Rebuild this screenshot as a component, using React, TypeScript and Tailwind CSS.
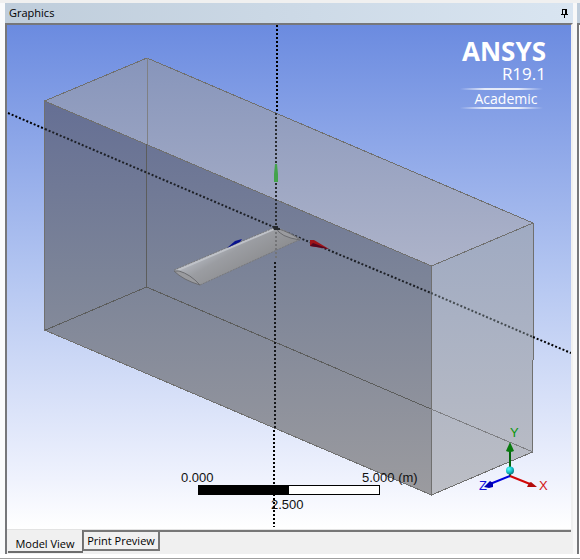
import React from "react";

const sans = "font-['Open_Sans','Noto_Sans',sans-serif]";
const arial = "font-['Liberation_Sans',Arial,sans-serif]";

function PinIcon() {
  return (
    <svg viewBox="0 0 7 9" className="h-[9px] w-[7px]" shapeRendering="crispEdges" aria-hidden="true">
      <path d="M1 0h5v5h1v1H4v3H3V6H0V5h1z" fill="#000" />
      <path d="M2 1h2v4H2z" fill="#dbe6f1" />
    </svg>
  );
}

function Gradients() {
  return (
    <defs>
      <linearGradient id="sky" gradientUnits="userSpaceOnUse" x1="0" y1="25" x2="0" y2="529">
        <stop offset="0" stopColor="#6b8be0" />
        <stop offset="0.5" stopColor="#b4c6f1" />
        <stop offset="0.9" stopColor="#eff2fd" />
        <stop offset="1" stopColor="#ffffff" />
      </linearGradient>
      <linearGradient id="front" gradientUnits="userSpaceOnUse" x1="0" y1="101" x2="0" y2="495">
        <stop offset="0" stopColor="#656f94" />
        <stop offset="0.45" stopColor="#7c8498" />
        <stop offset="1" stopColor="#9b9b9f" />
      </linearGradient>
      <linearGradient id="top" gradientUnits="userSpaceOnUse" x1="0" y1="58" x2="0" y2="266">
        <stop offset="0" stopColor="#8795bb" />
        <stop offset="1" stopColor="#adb3c9" />
      </linearGradient>
      <linearGradient id="side" gradientUnits="userSpaceOnUse" x1="0" y1="223" x2="0" y2="495">
        <stop offset="0" stopColor="#9faac2" />
        <stop offset="1" stopColor="#bcbec5" />
      </linearGradient>
      <linearGradient id="wing" gradientUnits="userSpaceOnUse" x1="225" y1="246" x2="240" y2="272">
        <stop offset="0" stopColor="#abaeb5" />
        <stop offset="0.3" stopColor="#9b9da2" />
        <stop offset="1" stopColor="#8e8f92" />
      </linearGradient>
      <linearGradient id="rule" x1="0" x2="1" y1="0" y2="0">
        <stop offset="0" stopColor="#fff" stopOpacity="0" />
        <stop offset="0.3" stopColor="#fff" stopOpacity="0.8" />
        <stop offset="0.7" stopColor="#fff" stopOpacity="0.8" />
        <stop offset="1" stopColor="#fff" stopOpacity="0" />
      </linearGradient>
      <radialGradient id="ball" cx="0.35" cy="0.3" r="0.8">
        <stop offset="0" stopColor="#5ff" />
        <stop offset="0.5" stopColor="#16c3cc" />
        <stop offset="1" stopColor="#046a70" />
      </radialGradient>
    </defs>
  );
}

function Enclosure() {
  return (
    <g>
      <path d="M45 101L147 58L533 223L431 266z" fill="url(#top)" />
      <path d="M45 101L431 266V495L45 330z" fill="url(#front)" />
      <path d="M431 266L533 223V452L431 495z" fill="url(#side)" />
      <g fill="none" stroke="#70706f" shapeRendering="crispEdges">
        <path d="M44.500 101L147 58L533 223L431.500 266z" />
        <path d="M44.500 101V330L431.500 495V266" />
        <path d="M533.500 223V360M532.500 360V452L431.500 495" />
        <path d="M147.500 58V144M431 409L533 452" stroke="#7f8084" />
        <path d="M146.500 144V287L45.500 330M146.500 287L431 409" stroke="#5c5d5c" />
      </g>
    </g>
  );
}

function ReferenceAxes() {
  return (
    <g fill="none" stroke="#000" strokeWidth="2" strokeDasharray="2 2">
      <path d="M277 25V113" />
      <path d="M276 113V163M276 183V228" stroke="#2b2e33" />
      <path d="M275 262V430" stroke="#17181b" />
      <path d="M274 430V527" />
      <path d="M8 113L45 129" />
      <path d="M45 129L276 228L431 293" stroke="#1c1f25" />
      <path d="M431 293L533 337" stroke="#444b50" />
      <path d="M533 337L571 353" />
    </g>
  );
}

function Wing() {
  return (
    <g>
      <path d="M174 270L276 227Q281 228 301 239L200 285Q187 282 174 270z" fill="url(#wing)" />
      <path d="M178 270L274 229" stroke="#bfc2c8" strokeWidth="2" />
      <path d="M174 271Q183 280 200 285Q190 274 179 271zM276 228Q280 237 300 240Q292 233 276 228" fill="#9a9b9f" stroke="#6b6c70" />
      <path d="M200 285L301 239M174 270L240 242L276 227" fill="none" stroke="#77787b" strokeDasharray="2 1" />
      <path d="M276 232V258" stroke="#737477" strokeWidth="2" strokeDasharray="2 2" />
      <path d="M227 248L235 241L242 239L240 242z" fill="#08128e" />
      <path d="M272 226h6v2h2v2h-6z" fill="#25282c" />
      <path d="M275 164h2l1 10v8h-4v-8z" fill="#43a34b" />
      <path d="M310 240L314 240L329 249L310 246z" fill="#a01318" />
      <path d="M310 246L329 249L313 243z" fill="#55061f" />
    </g>
  );
}

function ScaleRuler() {
  return (
    <g className={`${arial} text-[13px]`} fill="#111">
      <rect x="198.500" y="485.500" width="181" height="9" fill="#fff" stroke="#000" shapeRendering="crispEdges" />
      <rect x="198" y="485" width="91" height="10" fill="#000" />
      <text x="181" y="482">0.000</text>
      <text x="362" y="482">5.000 (m)</text>
      <text x="271" y="509">2.500</text>
    </g>
  );
}

function Triad() {
  return (
    <g className={`${arial} text-[13px]`}>
      <path d="M510 476V448" stroke="#00650b" strokeWidth="2" />
      <path d="M510 442L514 451Q510 453 506 451z" fill="#087a0f" />
      <path d="M510 476L490 484" stroke="#0000dc" strokeWidth="2" />
      <path d="M484 487L490 481L493 483L493 487L489 488z" fill="#0000b4" />
      <path d="M510 476L530 484" stroke="#d20808" strokeWidth="2" />
      <path d="M537 487L531 482L529 483L527 487z" fill="#b40b0b" />
      <circle cx="510" cy="470.500" r="4" fill="url(#ball)" />
      <text x="510" y="437" fill="#0b960e">Y</text>
      <text x="539" y="490" fill="#d21414">X</text>
      <text x="479" y="490" fill="#1010dc">Z</text>
    </g>
  );
}

function Branding() {
  return (
    <g className={sans} fill="#fff">
      <text x="546" y="61" textAnchor="end" className="text-[26px] font-bold">ANSYS</text>
      <text x="546" y="80" textAnchor="end" className="text-[17px]">R19.1</text>
      <text x="506" y="104" textAnchor="middle" className="text-[14px]">Academic</text>
      <rect x="460" y="88" width="83" height="2" fill="url(#rule)" />
      <rect x="460" y="107" width="83" height="2" fill="url(#rule)" />
    </g>
  );
}

export default function App() {
  return (
    <div className={`flex flex-col bg-[#f0f0f0] pt-[3px] text-black ${sans}`}>
      <div className="flex">
        <div className="w-[5px] shrink-0 bg-[#fafbfc]" />
        <section className="min-w-0 flex-1 bg-[#f0f0f0]" aria-label="Graphics">
          <header className="flex h-5 items-center justify-between bg-linear-to-r from-[#bfcddb] to-[#d9e5f1] pr-[5px] pl-1">
            <h1 className="text-[11px] leading-5">Graphics</h1>
            <button type="button" aria-label="Auto hide">
              <PinIcon />
            </button>
          </header>
          <div className="border-t-2 border-r-2 border-l-2 border-t-[#76777a] border-r-[#f0f0f0] border-l-[#76777a]">
            <svg viewBox="7 25 564 504" className="block h-auto w-full" role="img" aria-label="Model">
              <Gradients />
              <rect x="7" y="25" width="564" height="504" fill="url(#sky)" />
              <Enclosure />
              <ReferenceAxes />
              <Wing />
              <ScaleRuler />
              <Triad />
              <Branding />
            </svg>
            <nav className="flex h-[25px] items-start border-t border-[#e3e3e3] pl-px text-[11px]">
              <button type="button" className="h-[23px] w-[75px] border-r border-b-2 border-[#6d6d6d] pt-1 text-center leading-5">
                Model View
              </button>
              <div className="flex flex-1 items-start border-t-2 border-[#777]">
                <button type="button" className="h-[19px] w-[77px] border-r-2 border-b-2 border-l border-[#777] text-center leading-[18px]">
                  Print Preview
                </button>
              </div>
            </nav>
          </div>
        </section>
        <div className="w-1 shrink-0 bg-[#f8f8f8]" />
        <aside className="flex w-[3px] shrink-0 flex-col">
          <div className="h-5 bg-[#bfcddb]" />
          <div className="flex-1 border-t-2 border-l-2 border-[#76777a] bg-white" />
        </aside>
      </div>
      <footer className="border-t-4 border-b border-t-white border-b-[#a0a0a0]" />
    </div>
  );
}
